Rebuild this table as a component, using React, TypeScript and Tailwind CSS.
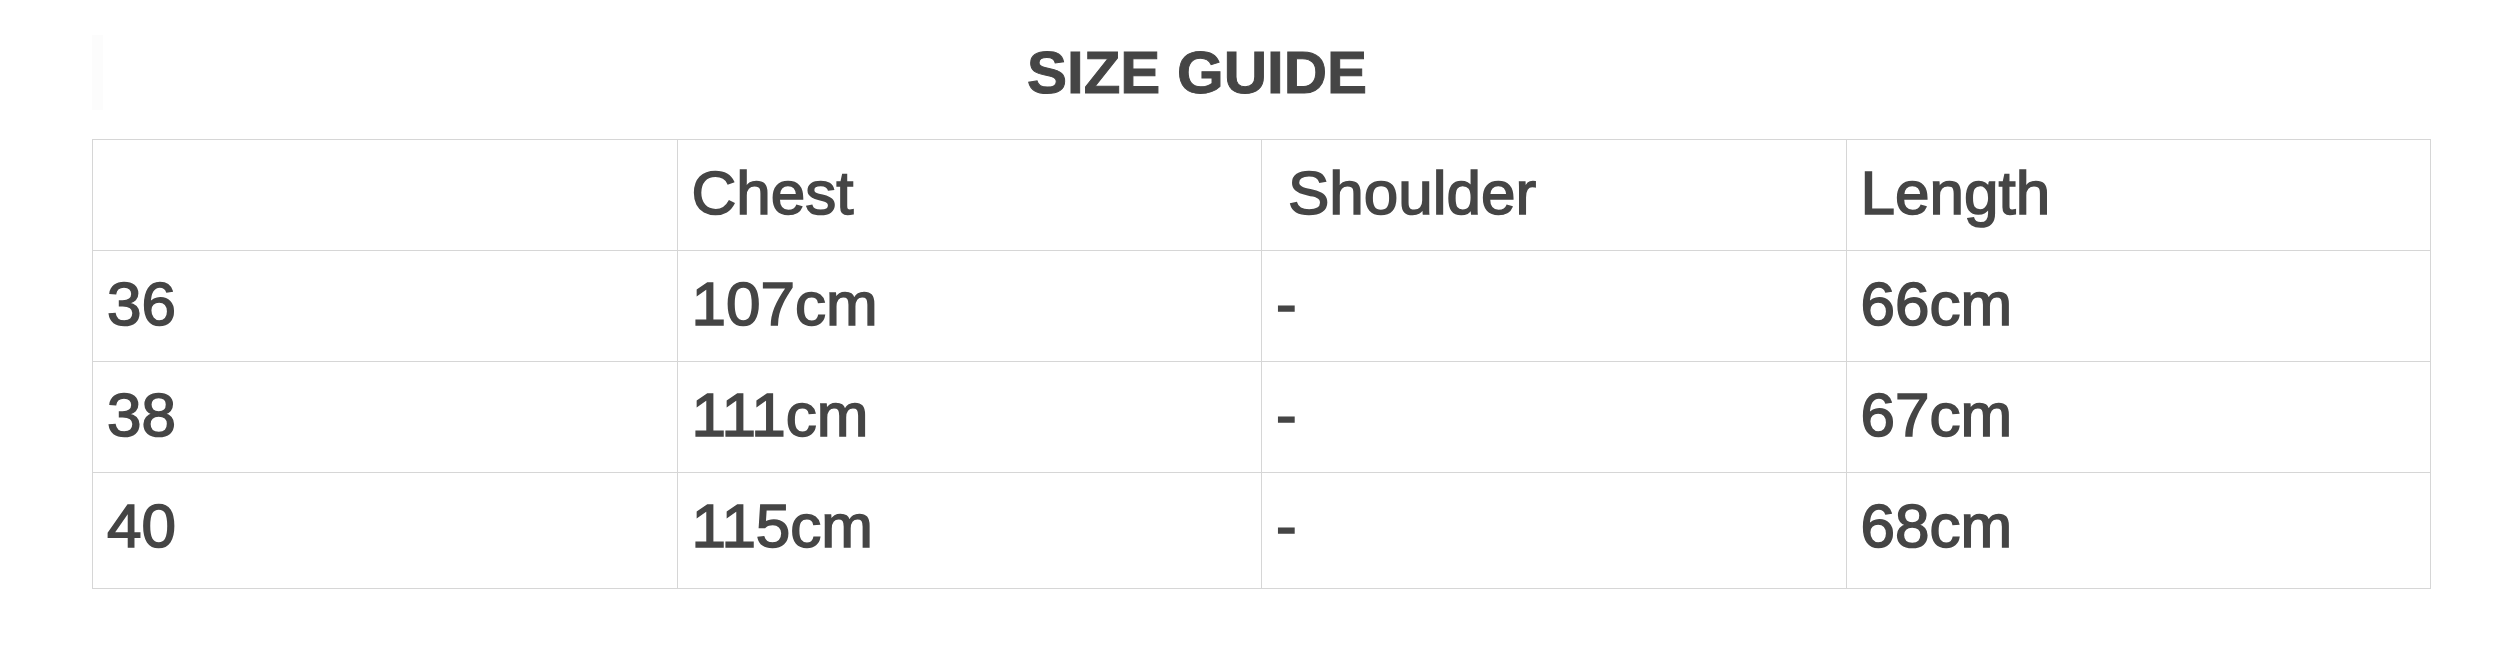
import React from "react";

type Row = {
  size: string;
  chest: string;
  shoulder: string;
  length: string;
};

const rows: Row[] = [
  { size: "36", chest: "107cm", shoulder: "-", length: "66cm" },
  { size: "38", chest: "111cm", shoulder: "-", length: "67cm" },
  { size: "40", chest: "115cm", shoulder: "-", length: "68cm" },
];

const cell =
  "border border-[#d6d6d6] pl-[14px] align-middle text-left font-normal";

const App = () => {
  return (
    <div
      className="w-[2502px] h-[670px] bg-white text-[#454545]"
      style={{ fontFamily: '"Liberation Sans", Arial, sans-serif' }}
    >
      <div className="flex h-[139px] pl-[92px] pt-[35px]">
        <div className="w-[11px] h-[75px] bg-[#fcfcfc]"></div>
        <h1 className="w-[2188px] pt-[8px] text-center text-[60px] leading-[60px] font-bold [-webkit-text-stroke:1px_#454545]">
          SIZE GUIDE
        </h1>
      </div>

      <table className="ml-[92px] w-[2339px] table-fixed border-collapse border border-[#d6d6d6] text-[62px] leading-[62px] [-webkit-text-stroke:1.6px_#454545]">
        <thead>
          <tr className="h-[111px]">
            <th className={cell + " pb-[5px]"}></th>
            <th className={cell + " pb-[5px]"}>Chest</th>
            <th className={cell + " pb-[5px] pl-[26px]"}>Shoulder</th>
            <th className={cell + " pb-[5px]"}>Length</th>
          </tr>
        </thead>
        <tbody>
          {rows.map((r, i) => {
            const pad = i === rows.length - 1 ? " pb-[10px]" : " pb-[5px]";
            return (
              <tr
                key={r.size}
                className={i === rows.length - 1 ? "h-[116px]" : "h-[111px]"}
              >
                <td className={cell + pad}>{r.size}</td>
                <td className={cell + pad}>{r.chest}</td>
                <td className={cell + pad}>{r.shoulder}</td>
                <td className={cell + pad}>{r.length}</td>
              </tr>
            );
          })}
        </tbody>
      </table>
    </div>
  );
};

export default App;
